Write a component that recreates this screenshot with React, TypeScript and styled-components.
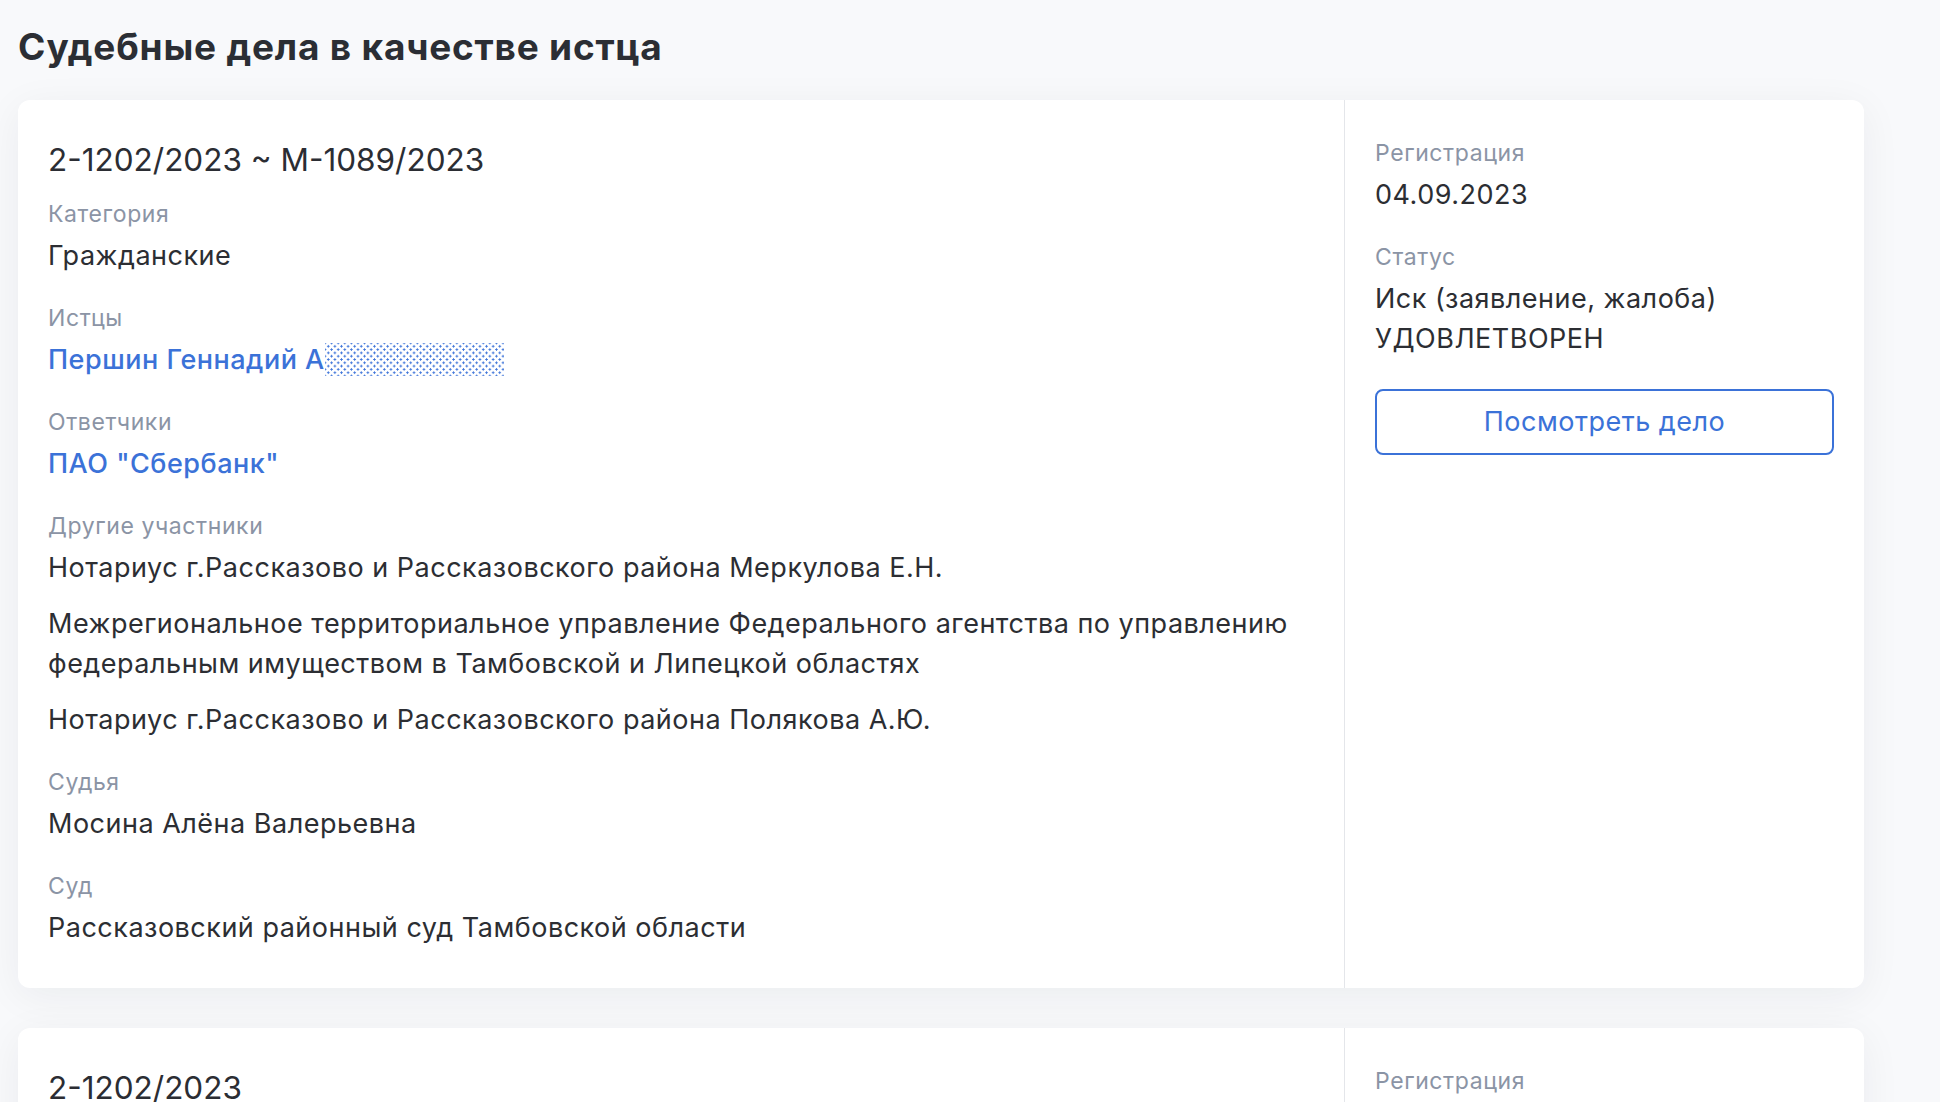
import React from "react";
import styled, { createGlobalStyle } from "styled-components";

const GlobalStyle = createGlobalStyle`
  html, body {
    margin: 0;
    padding: 0;
    background: #f8f9fb;
  }
  body {
    font-family: Inter, "Noto Sans", "Liberation Sans", sans-serif;
    color: #2c2e33;
    -webkit-font-smoothing: antialiased;
  }
  * { box-sizing: border-box; }
`;

const Page = styled.main`
  padding: 26px 18px 40px;
  width: 1882px;
`;

const Title = styled.h2`
  margin: 0 0 32px;
  font-size: 37px;
  line-height: 42px;
  font-weight: 700;
  letter-spacing: 0.8px;
  color: #2b2e34;
`;

const CardList = styled.div`
  display: flex;
  flex-direction: column;
  gap: 40px;
`;

const Card = styled.article`
  display: grid;
  grid-template-columns: 1fr 519px;
  background: #ffffff;
  border-radius: 12px;
  box-shadow: 0 8px 40px rgba(20, 30, 50, 0.06);
`;

const MainCol = styled.div`
  padding: 40px 30px 40px;
  border-right: 1px solid #e4e6ea;
`;

const SideCol = styled.div`
  padding: 38px 30px 40px;
`;

const CaseNumber = styled.h3`
  margin: 0 0 19px;
  font-size: 31.5px;
  line-height: 40px;
  font-weight: 400;
  color: #2b2d33;
`;

const Field = styled.div`
  & + & {
    margin-top: 27.5px;
  }
`;

const Label = styled.div`
  font-size: 23px;
  line-height: 30px;
  letter-spacing: 0.6px;
  color: #8b94a5;
  margin-bottom: 6.5px;
`;

const Value = styled.div<{ $link?: boolean }>`
  font-size: 27px;
  line-height: 40px;
  letter-spacing: 0.5px;
  color: ${(p) => (p.$link ? "#3b72d8" : "#2c2e33")};
  font-weight: ${(p) => (p.$link ? 500 : 400)};
  & + & {
    margin-top: 16px;
  }
`;

const Redacted = styled.span`
  display: inline-block;
  width: 179px;
  height: 33px;
  vertical-align: -7px;
  background-image: radial-gradient(circle, #3b72d8 0.9px, transparent 1.3px),
    radial-gradient(circle, #3b72d8 0.9px, transparent 1.3px);
  background-size: 6.6px 6.6px;
  background-position: 0 0, 3.3px 3.3px;
`;

const ViewButton = styled.button`
  display: block;
  width: 100%;
  height: 66px;
  margin-top: 30px;
  border: 2px solid #3b72d8;
  border-radius: 8px;
  background: #ffffff;
  color: #3b72d8;
  font-family: inherit;
  font-size: 27px;
  letter-spacing: 0.5px;
  font-weight: 400;
  cursor: pointer;
`;

type Item = { text: string; link?: boolean; redacted?: boolean };
type CaseData = {
  number: string;
  fields: { label: string; values: Item[] }[];
  registered: string;
  status: string[];
};

const cases: CaseData[] = [
  {
    number: "2-1202/2023 ~ М-1089/2023",
    fields: [
      { label: "Категория", values: [{ text: "Гражданские" }] },
      { label: "Истцы", values: [{ text: "Першин Геннадий А", link: true, redacted: true }] },
      { label: "Ответчики", values: [{ text: 'ПАО "Сбербанк"', link: true }] },
      {
        label: "Другие участники",
        values: [
          { text: "Нотариус г.Рассказово и Рассказовского района Меркулова Е.Н." },
          {
            text:
              "Межрегиональное территориальное управление Федерального агентства по управлению федеральным имуществом в Тамбовской и Липецкой областях",
          },
          { text: "Нотариус г.Рассказово и Рассказовского района Полякова А.Ю." },
        ],
      },
      { label: "Судья", values: [{ text: "Мосина Алёна Валерьевна" }] },
      { label: "Суд", values: [{ text: "Рассказовский районный суд Тамбовской области" }] },
    ],
    registered: "04.09.2023",
    status: ["Иск (заявление, жалоба)", "УДОВЛЕТВОРЕН"],
  },
  {
    number: "2-1202/2023",
    fields: [
      { label: "Категория", values: [{ text: "Гражданские" }] },
      { label: "Истцы", values: [{ text: "Першин Геннадий А", link: true, redacted: true }] },
      { label: "Ответчики", values: [{ text: 'ПАО "Сбербанк"', link: true }] },
      { label: "Судья", values: [{ text: "Мосина Алёна Валерьевна" }] },
      { label: "Суд", values: [{ text: "Рассказовский районный суд Тамбовской области" }] },
    ],
    registered: "04.09.2023",
    status: ["Иск (заявление, жалоба)", "УДОВЛЕТВОРЕН"],
  },
];

export default function App() {
  return (
    <>
      <GlobalStyle />
      <Page>
        <Title>Судебные дела в качестве истца</Title>
        <CardList>
          {cases.map((c, i) => (
            <Card key={i}>
              <MainCol>
                <CaseNumber>{c.number}</CaseNumber>
                {c.fields.map((f) => (
                  <Field key={f.label}>
                    <Label>{f.label}</Label>
                    {f.values.map((v, j) => (
                      <Value key={j} $link={v.link}>
                        {v.text}
                        {v.redacted && <Redacted />}
                      </Value>
                    ))}
                  </Field>
                ))}
              </MainCol>
              <SideCol>
                <Field>
                  <Label>Регистрация</Label>
                  <Value>{c.registered}</Value>
                </Field>
                <Field>
                  <Label>Статус</Label>
                  <Value>
                    {c.status[0]}
                    <br />
                    {c.status[1]}
                  </Value>
                </Field>
                <ViewButton>Посмотреть дело</ViewButton>
              </SideCol>
            </Card>
          ))}
        </CardList>
      </Page>
    </>
  );
}
